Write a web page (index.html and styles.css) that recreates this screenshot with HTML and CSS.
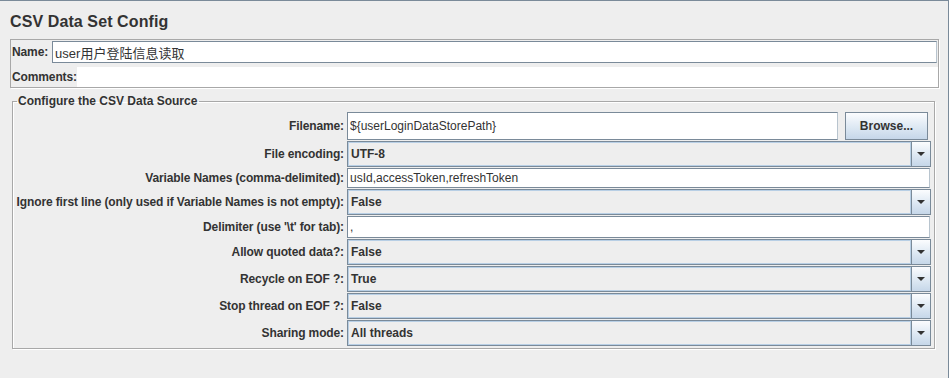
FILE: index.html
```html
<!DOCTYPE html>
<html lang="en">

<head>
    <meta charset="UTF-8">
    <meta name="viewport" content="width=device-width, initial-scale=1.0">
    <title>CSV Data Set Config</title>
    <link rel="stylesheet" href="styles.css">
</head>

<body>

    <div class="panel">
        <h1 class="title">CSV Data Set Config</h1>

        <div class="name-box">
            <div class="name-row">
                <span class="label">Name:</span>
                <span class="text-field name-field">user用户登陆信息读取</span>
            </div>
            <div class="comments-row">
                <span class="label">Comments:</span>
                <span class="comments-area"></span>
            </div>
        </div>

        <fieldset class="source">
            <legend>Configure the CSV Data Source</legend>
            <div class="form-grid">
                <span class="label">Filename:</span>
                <div class="file-row">
                    <span class="text-field">${userLoginDataStorePath}</span>
                    <span class="button">Browse...</span>
                </div>

                <span class="label">File encoding:</span>
                <div class="combo"><span class="combo-value">UTF-8</span><span class="combo-arrow"></span></div>

                <span class="label">Variable Names (comma-delimited):</span>
                <span class="text-field">usId,accessToken,refreshToken</span>

                <span class="label">Ignore first line (only used if Variable Names is not empty):</span>
                <div class="combo"><span class="combo-value">False</span><span class="combo-arrow"></span></div>

                <span class="label">Delimiter (use '\t' for tab):</span>
                <span class="text-field">,</span>

                <span class="label">Allow quoted data?:</span>
                <div class="combo"><span class="combo-value">False</span><span class="combo-arrow"></span></div>

                <span class="label">Recycle on EOF ?:</span>
                <div class="combo"><span class="combo-value">True</span><span class="combo-arrow"></span></div>

                <span class="label">Stop thread on EOF ?:</span>
                <div class="combo"><span class="combo-value">False</span><span class="combo-arrow"></span></div>

                <span class="label">Sharing mode:</span>
                <div class="combo"><span class="combo-value">All threads</span><span class="combo-arrow"></span></div>
            </div>
        </fieldset>
    </div>

</body>

</html>
```

FILE: styles.css
```css
body {
    margin: 0;
    font-family: "Liberation Sans", Arial, "Noto Sans CJK SC", sans-serif;
    font-size: 12px;
    color: #333;
    background-color: #eeeeee;
}

.panel {
    box-sizing: border-box;
    width: 949px;
    height: 378px;
    border-top: 1px solid #7a8a99;
    border-right: 1px solid #7a8a99;
    padding-left: 10px;
}

.title {
    margin: 0;
    padding: 11px 0 7px 0;
    font-size: 16px;
    line-height: 20px;
    font-weight: bold;
    letter-spacing: 0.1px;
}

.label {
    font-weight: bold;
    white-space: nowrap;
    letter-spacing: -0.12px;
}

.name-box {
    width: 926px;
    border: 1px solid #a8a8a8;
    box-shadow: 1px 1px 0 #fff;
    padding: 1px 0 0 1px;
}

.name-row {
    display: flex;
    align-items: center;
    gap: 4px;
    padding-right: 1px;
}

.name-field {
    flex: 1;
    height: 22px;
    font-size: 13px;
}

.comments-row {
    display: flex;
    align-items: center;
    margin-top: 4px;
    height: 20px;
}

.comments-area {
    flex: 1;
    align-self: stretch;
    background-color: #fff;
}

.text-field {
    box-sizing: border-box;
    display: flex;
    align-items: center;
    padding-left: 2px;
    background-color: #fff;
    border: 1px solid #7a8a99;
    border-right-color: #b8c4ce;
    white-space: nowrap;
}

.source {
    width: 918px;
    margin: 6px 0 0 2px;
    padding: 4px 3px 2px 0;
    border: 1px solid #a8a8a8;
    box-shadow: 1px 1px 0 #fff, inset 1px 1px 0 #fff;
}

.source legend {
    margin-left: 4px;
    padding: 0 2px 0 1px;
    font-weight: bold;
    line-height: 14px;
}

.form-grid {
    display: grid;
    grid-template-columns: 331px 1fr;
    grid-template-rows: 28px 26px 20px 26px 22px 26px 26px 26px 26px;
    column-gap: 3px;
    row-gap: 1px;
}

.form-grid > .label {
    display: flex;
    align-items: center;
    justify-content: flex-end;
}

.form-grid > .text-field {
    margin-right: 1px;
}

.file-row {
    display: flex;
    gap: 7px;
}

.file-row .text-field {
    flex: 1;
}

.button {
    box-sizing: border-box;
    width: 83px;
    margin-right: 3px;
    display: flex;
    align-items: center;
    justify-content: center;
    font-weight: bold;
    border: 1px solid #7a8a99;
    background: linear-gradient(#fbfcfe, #dde8f3 55%, #c6d7e9);
}

.combo {
    box-sizing: border-box;
    display: flex;
    border: 1px solid #7a8a99;
    background-color: #eeeeee;
}

.combo-value {
    flex: 1;
    display: flex;
    align-items: center;
    padding-left: 2px;
    font-weight: bold;
    border: 1px solid #b8cfe5;
}

.combo-arrow {
    width: 18px;
    position: relative;
    border-left: 1px solid #7a8a99;
    background: linear-gradient(#fbfcfe, #dde8f3 55%, #c6d7e9);
}

.combo-arrow::after {
    content: "";
    position: absolute;
    left: 5px;
    top: 10px;
    border-left: 4px solid transparent;
    border-right: 4px solid transparent;
    border-top: 4px solid #333;
}
```
